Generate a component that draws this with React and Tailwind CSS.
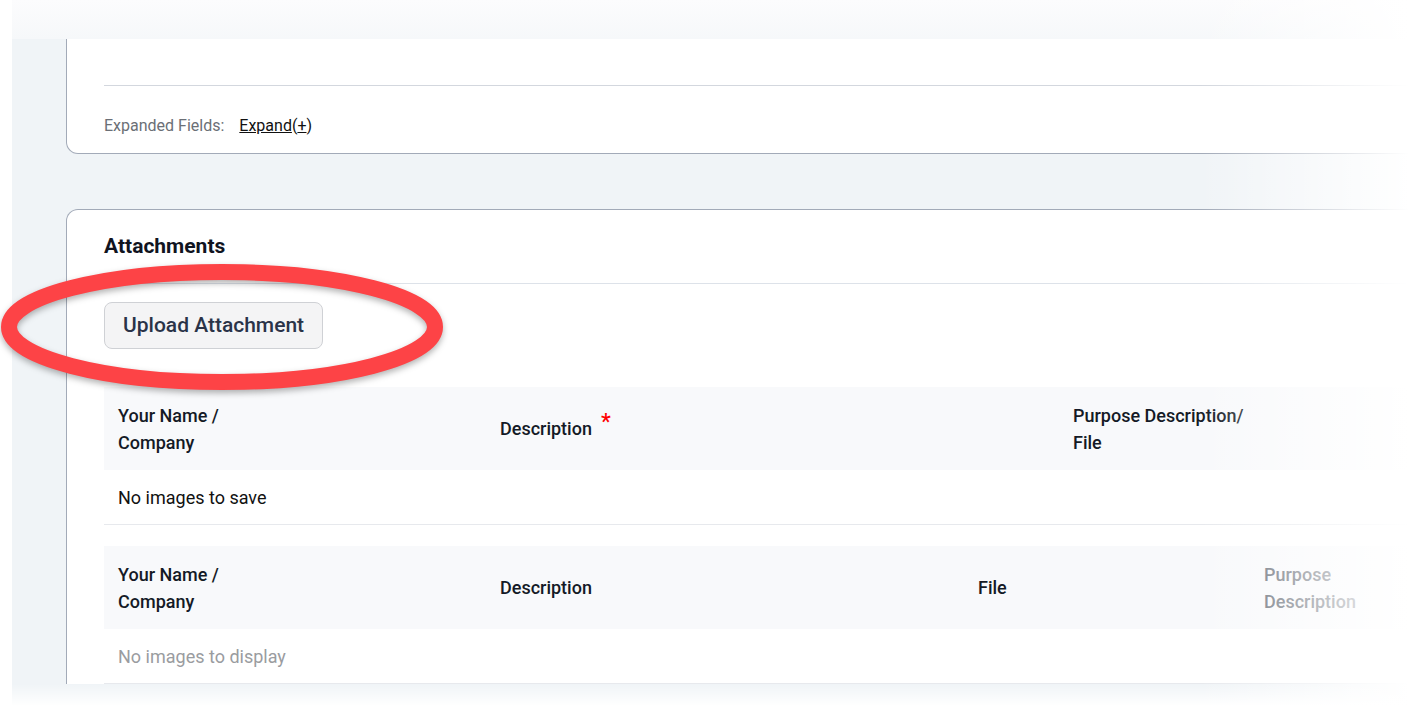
import React from 'react';

function HeaderCell({ children }) {
  return (
    <div className="flex items-center px-[14px] text-[18px] leading-[27px] font-medium text-[#141a26]">
      {children}
    </div>
  );
}

function AttachmentTable({ columns, template, emptyText, emptyClass }) {
  return (
    <div>
      <div className={`grid ${template} h-[83px] bg-[#f8f9fb]`}>
        {columns.map((col, i) => (
          <HeaderCell key={i}>{col}</HeaderCell>
        ))}
      </div>
      <div className="h-[55px] flex items-center px-[14px] border-b border-[#e7e9ed]">
        <span className={`text-[18px] ${emptyClass}`}>{emptyText}</span>
      </div>
    </div>
  );
}

export default function App() {
  return (
    <div className="relative w-[1409px] h-[706px] overflow-hidden bg-white font-[Roboto,'Liberation_Sans',sans-serif]">
      {/* faded top edge */}
      <div className="h-[39px] ml-[12px] bg-linear-to-b from-[#fcfcfd] to-[#f6f8fa]" />

      <div className="flex">
        <div className="w-[12px] shrink-0 bg-white" />
        <div className="flex-1 bg-[#f0f4f7] pl-[54px] pb-10">
          {/* details card, top cut off */}
          <div className="w-[1420px] bg-white border border-t-0 border-[#a2aab8] rounded-b-[12px]">
            <div className="h-[46px]" />
            <div className="ml-[37px] border-t border-[#d3d7de]" />
            <div className="pl-[37px] flex items-center h-[67px] pt-[13px]">
              <span className="text-[16px] text-[#6b6f76]">Expanded Fields:</span>
              <span className="ml-[15px] text-[16px] text-[#111]">
                <span className="underline">Expand</span>(<span className="underline">+</span>)
              </span>
            </div>
          </div>

          {/* attachments card */}
          <div className="mt-[55px] w-[1420px] bg-white border border-b-0 border-[#a2aab8] rounded-t-[12px]">
            <div className="pl-[37px] pt-[22px] pb-[23px] border-b border-[#dde2e9]">
              <h2 className="text-[21px] leading-[28px] font-bold text-[#10141f]">Attachments</h2>
            </div>

            <div className="px-[37px] pt-[18px]">
              <button className="h-[47px] px-[18px] rounded-[8px] border border-[#cfd1d5] bg-[#f4f4f5] text-[21px] font-medium text-[#2a3348]">
                Upload Attachment
              </button>

              <div className="mt-[38px]">
                <AttachmentTable
                  template="grid-cols-[382px_573px_1fr]"
                  columns={[
                    <span>Your Name /<br />Company</span>,
                    <span className="flex items-start">
                      Description
                      <span className="ml-[9px] text-[22px] leading-[22px] text-[#f00] relative -top-[4px]">*</span>
                    </span>,
                    <span>Purpose Description/<br />File</span>,
                  ]}
                  emptyText="No images to save"
                  emptyClass="text-[#111]"
                />
              </div>

              <div className="mt-[21px]">
                <AttachmentTable
                  template="grid-cols-[382px_478px_286px_1fr]"
                  columns={[
                    <span>Your Name /<br />Company</span>,
                    <span>Description</span>,
                    <span>File</span>,
                    <span className="text-[#5f6670]">Purpose<br />Description</span>,
                  ]}
                  emptyText="No images to display"
                  emptyClass="text-[#9a9ca0]"
                />
              </div>
            </div>
          </div>
        </div>
      </div>

      {/* red annotation ring around the upload button */}
      <svg
        className="absolute left-0 top-[255px] drop-shadow-[0_3px_3px_rgba(0,0,0,0.3)]"
        width="446"
        height="142"
        viewBox="0 0 446 142"
      >
        <ellipse cx="222" cy="72" rx="213" ry="55" fill="none" stroke="#fd4346" strokeWidth="16" />
      </svg>

      {/* soft fade on right and bottom edges */}
      <div className="pointer-events-none absolute right-0 top-0 bottom-0 w-[210px] bg-linear-to-r from-white/0 to-white" />
      <div className="pointer-events-none absolute left-0 right-0 bottom-0 h-[22px] bg-linear-to-b from-white/0 to-white" />
    </div>
  );
}
